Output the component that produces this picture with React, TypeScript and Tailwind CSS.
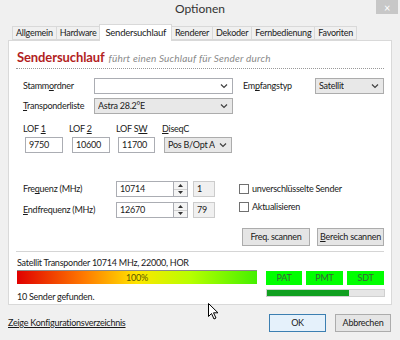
import React from 'react'

const tabs = ['Allgemein', 'Hardware', 'Sendersuchlauf', 'Renderer', 'Dekoder', 'Fernbedienung', 'Favoriten']

function Chevron() {
  return (
    <svg width="8" height="6" viewBox="0 0 8 6" className="shrink-0">
      <path d="M1 1.5 L4 4.5 L7 1.5" fill="none" stroke="#404040" strokeWidth="1.2" />
    </svg>
  )
}

function Select({ value, width, white }: { value: string; width: string; white?: boolean }) {
  return (
    <div
      className={`${width} h-[16px] flex items-center justify-between pl-[3px] pr-[4px] border whitespace-nowrap ${
        white ? 'bg-white border-[#abadb3]' : 'bg-[#e8e8e8] border-[#acacac]'
      }`}
    >
      <span className="truncate">{value}</span>
      <Chevron />
    </div>
  )
}

function Input({ value, width }: { value: string; width: string }) {
  return (
    <div className={`${width} h-[16px] flex items-center pl-[3px] bg-white border border-[#abadb3]`}>
      {value}
    </div>
  )
}

function Spinner() {
  return (
    <div className="w-[14px] h-[16px] flex flex-col border border-l-0 border-[#abadb3] bg-[#f4f4f4]">
      <div className="flex-1 flex items-center justify-center border-b border-[#d0d0d0]">
        <svg width="5" height="3" viewBox="0 0 5 3">
          <path d="M0 3 L2.5 0 L5 3 Z" fill="#333" />
        </svg>
      </div>
      <div className="flex-1 flex items-center justify-center">
        <svg width="5" height="3" viewBox="0 0 5 3">
          <path d="M0 0 L2.5 3 L5 0 Z" fill="#333" />
        </svg>
      </div>
    </div>
  )
}

function Check({ label }: { label: string }) {
  return (
    <div className="flex items-center h-[10px] gap-[3px] whitespace-nowrap">
      <div className="w-[10px] h-[10px] border border-[#707070] bg-white" />
      <span>{label}</span>
    </div>
  )
}

function Btn({ children, width, focus }: { children: React.ReactNode; width: string; focus?: boolean }) {
  return (
    <div
      className={`${width} h-[18px] flex items-center justify-center border whitespace-nowrap ${
        focus ? 'border-[#3c7fb1] bg-[#e5f1fb]' : 'border-[#acacac] bg-[#e5e5e5]'
      }`}
    >
      {children}
    </div>
  )
}

export default function App() {
  return (
    <div
      className="relative w-[400px] h-[340px] bg-[#f0f0f0] text-[9px] tracking-[-0.25px] text-[#1a1a1a] flex flex-col overflow-hidden"
      style={{ fontFamily: 'Lato, "Open Sans", sans-serif' }}
    >
      {/* Title bar */}
      <div className="h-[24px] flex items-start">
        <div className="flex-1 pl-[24px] text-center text-[12px] tracking-normal text-[#333] leading-[18px]">Optionen</div>
        <div className="w-[22px] h-[14px] mr-[2px] bg-[#c7c7c7] flex items-center justify-center text-white text-[11px] leading-none">
          ×
        </div>
      </div>

      {/* Tabs */}
      <div className="h-[16px] pl-[12px] flex items-end whitespace-nowrap">
        {tabs.map((t) =>
          t === 'Sendersuchlauf' ? (
            <div
              key={t}
              className="h-[17px] -mb-[1px] -ml-[1px] z-10 px-[5px] flex items-center bg-white border border-b-0 border-[#d9d9d9] text-[9.5px]"
            >
              {t}
            </div>
          ) : (
            <div
              key={t}
              className="h-[14px] px-[3px] flex items-center bg-[#f0f0f0] border border-[#d9d9d9] -ml-[1px] first:ml-0"
            >
              {t}
            </div>
          )
        )}
      </div>

      {/* Panel */}
      <div className="ml-[8px] w-[384px] h-[265px] bg-white border border-[#d9d9d9] px-[7px] flex flex-col whitespace-nowrap">
        <div className="pt-[8px] pb-[2px] border-b border-dotted border-[#999] flex items-baseline gap-[4px] pl-[1px]">
          <span className="text-[13px] tracking-[-0.1px] font-bold text-[#b21e1e] leading-[16px]">Sendersuchlauf</span>
          <span className="italic text-[#8a8a8a] text-[10px] tracking-[0.2px]">führt einen Suchlauf für Sender durch</span>
        </div>

        <div className="mt-[9px] flex items-center pl-[7px]">
          <span className="w-[71px]">
            Stamm<u>o</u>rdner
          </span>
          <Select value="" width="w-[139px]" white />
          <span className="ml-[10px] w-[72px]">
            Em<u>p</u>fangstyp
          </span>
          <Select value="Satellit" width="w-[69px]" />
        </div>

        <div className="mt-[4px] flex items-center pl-[7px]">
          <span className="w-[71px]">
            <u>T</u>ransponderliste
          </span>
          <Select value="Astra 28.2°E" width="w-[139px]" />
        </div>

        <div className="mt-[9px] flex pl-[7px]">
          <div className="w-[46px] flex flex-col gap-[2px]">
            <span className="leading-[12px]">
              LOF <u>1</u>
            </span>
            <div className="ml-[2px]">
              <Input value="9750" width="w-[38px]" />
            </div>
          </div>
          <div className="w-[47px] flex flex-col gap-[2px]">
            <span className="leading-[12px]">
              LOF <u>2</u>
            </span>
            <div className="ml-[3px]">
              <Input value="10600" width="w-[38px]" />
            </div>
          </div>
          <div className="w-[46px] flex flex-col gap-[2px]">
            <span className="leading-[12px]">
              LOF S<u>W</u>
            </span>
            <div className="ml-[2px]">
              <Input value="11700" width="w-[37px]" />
            </div>
          </div>
          <div className="flex flex-col gap-[2px]">
            <span className="leading-[12px]">
              <u>D</u>iseqC
            </span>
            <div className="ml-[2px]">
              <Select value="Pos B/Opt A" width="w-[68px]" />
            </div>
          </div>
        </div>

        <div className="flex pl-[7px]">
          <div className="mt-[28px] w-[216px] flex flex-col gap-[5px]">
            <div className="flex items-center">
              <span className="w-[93px]">
                Fre<u>q</u>uenz (MHz)
              </span>
              <Input value="10714" width="w-[58px]" />
              <Spinner />
              <div className="ml-[5px] w-[22px] h-[16px] flex items-center pl-[3px] bg-[#f0f0f0] border border-[#cccccc]">1</div>
            </div>
            <div className="flex items-center">
              <span className="w-[93px]">
                <u>E</u>ndfrequenz (MHz)
              </span>
              <Input value="12670" width="w-[58px]" />
              <Spinner />
              <div className="ml-[5px] w-[22px] h-[16px] flex items-center pl-[3px] bg-[#f0f0f0] border border-[#cccccc]">79</div>
            </div>
          </div>
          <div className="mt-[31px] flex flex-col">
            <Check label="unverschlüsselte Sender" />
            <div className="mt-[8px]">
              <Check label="Aktualisieren" />
            </div>
            <div className="mt-[16px] ml-[3px] flex gap-[7px]">
              <Btn width="w-[68px]">Freq. scannen</Btn>
              <Btn width="w-[67px]">
                <span>
                  <u>B</u>ereich scannen
                </span>
              </Btn>
            </div>
          </div>
        </div>

        <div className="mt-[5px] border-t border-[#d5d5d5]" />

        <div className="mt-[5px] pl-[1px] leading-[11px]">Satellit Transponder 10714 MHz, 22000, HOR</div>
        <div className="mt-[2px] flex pl-[1px]">
          <div className="flex flex-col">
            <div className="w-[240px] h-[14px] border-t border-[#8a8a8a] bg-[linear-gradient(to_right,#e00000,#ff7a00_28%,#ffe600_50%,#b8ff00_72%,#44f000)] flex items-center justify-center text-[#5a5a00]">
              100%
            </div>
            <div className="mt-[7px] leading-[11px]">10 Sender gefunden.</div>
          </div>
          <div className="ml-[9px] mt-[1px] flex flex-col">
            <div className="flex gap-[4px]">
              <div className="w-[36px] h-[14px] bg-[#00ff00] flex items-center justify-center text-[#3b5e3b]">PAT</div>
              <div className="w-[37px] h-[14px] bg-[#00ff00] flex items-center justify-center text-[#3b5e3b]">PMT</div>
              <div className="w-[37px] h-[14px] bg-[#00ff00] flex items-center justify-center text-[#3b5e3b]">SDT</div>
            </div>
            <div className="mt-[4px] w-[119px] h-[8px] bg-[#e6e6e6] border border-[#d0d0d0]">
              <div className="w-[70%] h-full bg-[#10a020]" />
            </div>
          </div>
        </div>
      </div>

      {/* Bottom */}
      <div className="flex-1 flex items-center pl-[8px] pr-[9px]">
        <span className="underline flex-1">Zeige Konfigurationsverzeichnis</span>
        <Btn width="w-[57px]" focus>
          OK
        </Btn>
        <div className="ml-[9px]">
          <Btn width="w-[56px]">Abbrechen</Btn>
        </div>
      </div>

      {/* mouse pointer */}
      <svg className="absolute left-[208px] top-[303px]" width="11" height="17" viewBox="0 0 11 17">
        <path d="M0.5 0.5 L0.5 13.5 L3.5 10.5 L6 16 L8 15 L5.5 9.8 L10 9.8 Z" fill="#fff" stroke="#000" strokeWidth="1" />
      </svg>
    </div>
  )
}
